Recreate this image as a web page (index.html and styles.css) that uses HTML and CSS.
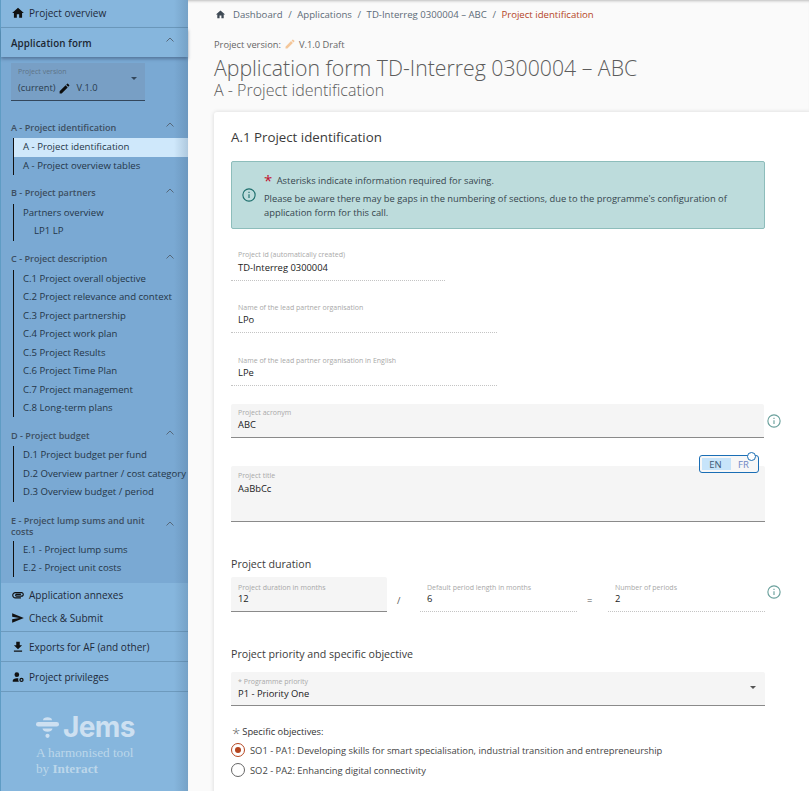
FILE: index.html
```html
<!DOCTYPE html>
<html lang="en">
<head>
<meta charset="utf-8">
<title>Application form</title>
<link rel="stylesheet" href="styles.css">
</head>
<body>
<div class="app">
  <aside class="sidebar">
    <a class="top-link first"><svg class="ico" viewBox="0 0 24 24"><path d="M10 20v-6h4v6h5v-8h3L12 3 2 12h3v8z"/></svg>Project overview</a>
    <div class="af-head"><span>Application form</span><svg class="chev" viewBox="0 0 8 5"><path d="M.5 4.500 4 1l3.500 3.500"/></svg></div>
    <div class="tree">
      <div class="version">
        <div class="version-label">Project version</div>
        <div class="version-value"><span>(current)</span><svg class="pencil" viewBox="0 0 24 24"><path d="M3 17.250V21h3.750L17.810 9.940l-3.750-3.750zM20.710 7.040a1 1 0 0 0 0-1.410l-2.340-2.340a1 1 0 0 0-1.410 0l-1.830 1.830 3.750 3.750z"/></svg><span class="vnum">V.1.0</span></div>
        <span class="caret"></span>
      </div>

      <section class="sec sec-a">
        <div class="sec-head"><span>A - Project identification</span><svg class="chev" viewBox="0 0 8 5"><path d="M.5 4.500 4 1l3.500 3.500"/></svg></div>
        <ul class="items">
          <li class="active">A - Project identification</li>
          <li>A - Project overview tables</li>
        </ul>
      </section>
      <section class="sec">
        <div class="sec-head"><span>B - Project partners</span><svg class="chev" viewBox="0 0 8 5"><path d="M.5 4.500 4 1l3.500 3.500"/></svg></div>
        <ul class="items">
          <li>Partners overview</li>
          <li class="indent">LP1 LP</li>
        </ul>
      </section>
      <section class="sec">
        <div class="sec-head"><span>C - Project description</span><svg class="chev" viewBox="0 0 8 5"><path d="M.5 4.500 4 1l3.500 3.500"/></svg></div>
        <ul class="items">
          <li>C.1 Project overall objective</li>
          <li>C.2 Project relevance and context</li>
          <li>C.3 Project partnership</li>
          <li>C.4 Project work plan</li>
          <li>C.5 Project Results</li>
          <li>C.6 Project Time Plan</li>
          <li>C.7 Project management</li>
          <li>C.8 Long-term plans</li>
        </ul>
      </section>
      <section class="sec">
        <div class="sec-head"><span>D - Project budget</span><svg class="chev" viewBox="0 0 8 5"><path d="M.5 4.500 4 1l3.500 3.500"/></svg></div>
        <ul class="items">
          <li>D.1 Project budget per fund</li>
          <li>D.2 Overview partner / cost category</li>
          <li>D.3 Overview budget / period</li>
        </ul>
      </section>
      <section class="sec sec-e">
        <div class="sec-head two"><span>E - Project lump sums and unit costs</span><svg class="chev" viewBox="0 0 8 5"><path d="M.5 4.500 4 1l3.500 3.500"/></svg></div>
        <ul class="items">
          <li>E.1 - Project lump sums</li>
          <li>E.2 - Project unit costs</li>
        </ul>
      </section>
    </div>
    <div class="bottom-group">
      <a class="bottom-link"><svg class="ico" viewBox="0 0 24 24"><path d="M2 12.500C2 9.460 4.460 7 7.500 7H18c2.210 0 4 1.790 4 4s-1.790 4-4 4H9.500C8.120 15 7 13.880 7 12.500S8.120 10 9.500 10H17v2H9.410c-.55 0-.55 1 0 1H18c1.100 0 2-.9 2-2s-.9-2-2-2H7.500C5.570 9 4 10.570 4 12.500S5.570 16 7.500 16H17v2H7.500C4.460 18 2 15.540 2 12.500z"/></svg>Application annexes</a>
      <a class="bottom-link"><svg class="ico" viewBox="0 0 24 24"><path d="M2 4 22 12 2 20v-6l12-2-12-2z"/></svg>Check &amp; Submit</a>
    </div>
    <a class="top-link ruled"><svg class="ico" viewBox="0 0 24 24"><path d="M19 9h-4V3H9v6H5l7 7zM5 18v2h14v-2z"/></svg>Exports for AF (and other)</a>
    <a class="top-link ruled"><svg class="ico" viewBox="0 0 24 24"><circle cx="10" cy="8" r="4"/><path d="M10 14c-4 0-7 2-7 4v2h10.500a7 7 0 0 1-1-5.800A11 11 0 0 0 10 14z"/><circle class="gear" cx="18" cy="17" r="2.600"/></svg>Project privileges</a>
    <div class="brand">
      <div class="brand-main">
        <svg class="brand-mark" viewBox="0 0 23 21"><path d="M7 3.200C7 1 9 .3 11.500.3S16 1 16 3.200z"/><rect x="0" y="5" width="23" height="4.500" rx="2.250"/><path d="M6.500 11.500h10c-.3 2.200-2.500 3.300-5 3.300s-4.700-1.100-5-3.300z"/><circle cx="11.500" cy="18.800" r="2.100"/></svg>
        <span class="brand-name">Jems</span>
      </div>
      <div class="brand-tag">A harmonised tool<br>by <b>Interact</b></div>
    </div>
  </aside>

  <main class="main">
    <nav class="crumbs">
      <svg class="crumb-home" viewBox="0 0 24 24"><path d="M10 20v-6h4v6h5v-8h3L12 3 2 12h3v8z"/></svg>
      <span>Dashboard</span><i>/</i><span>Applications</span><i>/</i><span>TD-Interreg 0300004 – ABC</span><i>/</i><span class="crumb-current">Project identification</span>
    </nav>
    <div class="version-line"><span>Project version:</span><svg class="draft-pencil" viewBox="0 0 24 24"><path d="M3 17.250V21h3.750L17.810 9.940l-3.750-3.750zM20.710 7.040a1 1 0 0 0 0-1.410l-2.340-2.340a1 1 0 0 0-1.410 0l-1.830 1.830 3.750 3.750z"/></svg><span>V.1.0 Draft</span></div>
    <h1>Application form TD-Interreg 0300004 – ABC</h1>
    <h2>A - Project identification</h2>

    <div class="card">
      <h3 class="card-title">A.1 Project identification</h3>
      <div class="alert">
        <svg class="info" viewBox="0 0 16 16"><circle cx="8" cy="8" r="7"/><path d="M8 7.200v4.300M8 4.200v1.500"/></svg>
        <div class="alert-text">
          <p><span class="star">*</span> Asterisks indicate information required for saving.</p>
          <p>Please be aware there may be gaps in the numbering of sections, due to the programme's configuration of application form for this call.</p>
        </div>
      </div>

      <div class="ro ro-id"><label>Project id (automatically created)</label><div class="val">TD-Interreg 0300004</div></div>
      <div class="ro ro-lead"><label>Name of the lead partner organisation</label><div class="val">LPo</div></div>
      <div class="ro ro-lead"><label>Name of the lead partner organisation in English</label><div class="val">LPe</div></div>

      <div class="row-info">
        <div class="fill fill-acr"><label>Project acronym</label><div class="val">ABC</div></div>
        <svg class="info side" viewBox="0 0 16 16"><circle cx="8" cy="8" r="7"/><path d="M8 7.200v4.300M8 4.200v1.500"/></svg>
      </div>

      <div class="title-wrap">
        <div class="lang">
          <span class="lang-on">EN</span><span class="lang-off">FR</span>
          <span class="lang-dot"></span>
        </div>
        <div class="fill fill-title"><label>Project title</label><div class="val">AaBbCc</div></div>
      </div>

      <h4 class="dur-head">Project duration</h4>
      <div class="duration">
        <div class="fill fill-dur"><label>Project duration in months</label><div class="val">12</div></div>
        <span class="op op-div">/</span>
        <div class="ro ro-dur"><label>Default period length in months</label><div class="val">6</div></div>
        <span class="op op-eq">=</span>
        <div class="ro ro-dur"><label>Number of periods</label><div class="val">2</div></div>
        <svg class="info side" viewBox="0 0 16 16"><circle cx="8" cy="8" r="7"/><path d="M8 7.200v4.300M8 4.200v1.500"/></svg>
      </div>

      <h4 class="prio-head">Project priority and specific objective</h4>
      <div class="fill fill-sel"><label>* Programme priority</label><div class="val">P1 - Priority One</div><span class="sel-caret"></span></div>

      <div class="so-label"><span class="so-star">*</span><span>Specific objectives:</span></div>
      <div class="radio checked first-radio"><span class="dot"></span>SO1 - PA1: Developing skills for smart specialisation, industrial transition and entrepreneurship</div>
      <div class="radio"><span class="dot"></span>SO2 - PA2: Enhancing digital connectivity</div>
    </div>
  </main>
</div>
</body>
</html>
```
FILE: styles.css
```css
* { box-sizing: border-box; }
html, body { margin: 0; padding: 0; }
body { font-family: "Open Sans", "Liberation Sans", sans-serif; color: #222; overflow: hidden; }
.app { display: flex; width: 809px; height: 791px; overflow: hidden; background: #fafafa; }

/* Sidebar */
.sidebar { width: 188px; flex: none; height: 791px; background: #86b6dd; position: relative; font-size: 10.050px; color: #1e2a3a; border-left: 1px solid #5f9cc4; }
.sidebar::after { content: ""; position: absolute; top: 0; right: 0; bottom: 0; width: 14px; background: linear-gradient(to right, rgba(60,90,120,0), rgba(60,90,120,.22)); pointer-events: none; }
.ico { width: 14px; height: 14px; fill: #111; flex: none; margin-right: 4px; }
.gear { fill: none; stroke: #111; stroke-width: 2.200; }
.chev { width: 8px; height: 5px; fill: none; stroke: #56687a; stroke-width: 1; flex: none; }
.top-link { display: flex; align-items: center; height: 30px; padding-left: 10px; border-bottom: 1px solid #6d9abd; }
.top-link.first { height: 28px; padding-bottom: 2px; }
.af-head { display: flex; justify-content: space-between; align-items: center; height: 29px; padding: 2px 14px 0 10px; font-size: 9.800px; font-weight: 600; color: #1c2733; letter-spacing: .1px; box-shadow: 0 2px 3px rgba(40,60,90,.45); position: relative; }
.af-head .chev { margin-top: -8px; }
.tree { background: #7aa9d3; height: 526px; overflow: hidden; padding-top: 6px; font-size: 9.600px; }
.version { position: relative; margin-left: 10px; width: 134px; height: 38px; background: #789fc5; border-bottom: 1px solid #33475c; padding: 4px 7px 0; }
.version-label { font-size: 7px; color: #5e7488; line-height: 10px; }
.version-value { font-size: 9.300px; line-height: 14px; margin-top: 4px; color: #2a3c4e; display: flex; align-items: center; gap: 3px; }
.pencil { width: 13px; height: 13px; fill: #0c0c0c; }
.vnum { margin-left: 2px; }
.caret { position: absolute; right: 8px; top: 14px; border: 3px solid transparent; border-top: 3px solid #33475c; border-bottom: 0; }
.sec { margin-top: 9.300px; }
.sec-a { margin-top: 17.500px; }
.sec-e { margin-top: 12.800px; }
.sec-head { display: flex; justify-content: space-between; align-items: center; min-height: 17px; padding: 0 14px 0 10px; font-size: 9.100px; font-weight: 600; color: #3d4f62; line-height: 11px; }
.sec-head.two { margin-bottom: 4px; }
.sec-head.two span { width: 140px; }
.sec-head .chev { margin-top: -5px; }
.items { list-style: none; margin: 2.700px 0 0 12px; padding: 0; border-left: 1px solid #111; }
.items li { height: 18.450px; line-height: 18.500px; padding-left: 9px; color: #253648; white-space: nowrap; }
.items li.active { background: #cfe8fb; }
.items li.indent { padding-left: 20px; }
.bottom-group { border-bottom: 1px solid #6d9abd; height: 49px; }
.bottom-link { display: flex; align-items: center; height: 23px; padding-left: 10px; }
.brand { padding: 25px 0 0 35px; color: #cde0f1; }
.brand-main { display: flex; align-items: center; gap: 4px; }
.brand-mark { width: 23px; height: 21px; fill: #cde0f1; }
.brand-name { font-family: "Inter", "Liberation Sans", sans-serif; font-weight: 700; font-size: 28px; line-height: 21px; letter-spacing: -.6px; }
.brand-tag { font-family: "Liberation Serif", serif; font-size: 13.200px; line-height: 15.500px; margin-top: 7px; color: #bcd6ea; }

/* Main */
.main { flex: 1; min-width: 0; position: relative; padding: 0 0 0 26px; box-shadow: inset 0 3px 3px -2px rgba(0,0,0,.25); }
.crumbs { display: flex; align-items: center; height: 28px; font-size: 9.600px; color: #5d6b78; margin-left: 1px; }
.crumbs i { font-style: normal; margin: 0 5.500px 0 5.700px; }
.crumb-home { width: 11px; height: 11px; fill: #3f4a55; margin-right: 7px; }
.crumb-current { color: #b5451f; }
.version-line { display: flex; align-items: center; gap: 3px; font-size: 9.300px; color: #666; margin-top: 9px; height: 14px; white-space: pre; }
.draft-pencil { width: 12px; height: 12px; fill: #f4c79a; }
h1 { margin: 4px 0 0; font-size: 21.250px; font-weight: 300; line-height: 25px; color: #5c5c5c; white-space: nowrap; }
h2 { margin: 0; font-size: 16px; font-weight: 300; line-height: 20px; color: #5c5c5c; }
.card { background: #fff; margin-top: 12px; height: 700px; padding: 15px 0 0 17px; border-radius: 3px 0 0 0; box-shadow: 0 0 4px rgba(0,0,0,.14); width: 596px; }
.card-title { margin: 0; font-size: 13.300px; font-weight: 400; line-height: 20px; color: #3a3a3a; }
.alert { display: flex; align-items: center; width: 534px; height: 68px; margin-top: 14px; background: #bddcdc; border: 1px solid #8dbdbb; border-radius: 2px; padding: 0 10px; font-size: 9.350px; color: #37474f; }
.alert .info { margin-right: 8px; }
.alert-text { line-height: 14px; }
.alert-text p { margin: 4px 0 0; }
.star { color: #c2112f; font-size: 15px; line-height: 10px; vertical-align: -2px; margin-right: 2px; }
.info { width: 14px; height: 14px; fill: none; stroke: #1d6e6c; stroke-width: 1.300; flex: none; }
.info.side { stroke: #6aa09c; }
label { display: block; font-size: 7px; line-height: 10px; padding-top: 1px; margin-bottom: -1px; color: #a8a8a8; white-space: nowrap; }
.val { font-size: 9.400px; line-height: 13px; color: #222; margin-top: 2px; }
.ro { padding: 6px 7px 0; border-bottom: 1px dotted #c4c4c4; }
.ro-id { width: 214px; height: 37px; margin-top: 15px; padding-top: 5px; }
.ro-lead { width: 266px; height: 37px; margin-top: 16px; }
.ro-lead .val { margin-top: 1px; }
.ro-id + .ro-lead { margin-top: 15px; }
.row-info { display: flex; align-items: center; width: 550px; margin-top: 18px; justify-content: space-between; }
.fill { position: relative; background: #f5f5f5; border-bottom: 1px solid #8a8a8a; padding: 4px 7px 0; border-radius: 2px 2px 0 0; }
.fill-acr { width: 533px; height: 34px; padding-top: 3px; }
.fill-acr .val { margin-top: 1px; }
.title-wrap { position: relative; width: 534px; margin-top: 28px; }
.fill-title { height: 56px; }
.lang { position: absolute; right: 6px; top: -11px; z-index: 2; width: 60px; height: 18px; display: flex; padding: 2px; border: 1px solid #1a6eb5; border-radius: 3px; background: #f7f7f7; font-size: 9.500px; line-height: 13px; text-align: center; color: #4b6f95; }
.lang-on { width: 30px; background: #c7e4fa; color: #405a75; padding-right: 2px; }
.lang-off { width: 26px; color: #6f88c4; }
.lang-dot { position: absolute; right: 2px; top: -4px; width: 9px; height: 9px; border: 1px solid #1a6eb5; border-radius: 50%; background: #fff; }
.dur-head, .prio-head { margin: 0; font-size: 10.650px; font-weight: 400; line-height: 16px; color: #3a3a3a; }
.dur-head { margin-top: 34px; }
.duration { display: flex; margin-top: 5px; width: 550px; align-items: flex-start; }
.fill-dur { width: 156px; height: 35px; padding-top: 5px; }
.ro-dur { width: 157px; height: 35px; padding-top: 5px; }
.duration .val { margin-top: 0; }
.op { font-size: 9.400px; line-height: 13px; color: #555; margin-top: 17px; padding-left: 10px; }
.op-div { width: 33px; }
.op-eq { width: 31px; }
.duration .side { margin: 8px 0 0 2px; }
.prio-head { margin-top: 34px; }
.fill-sel { width: 534px; height: 34px; margin-top: 10px; }
.fill-sel .val { margin-top: 1px; }
.sel-caret { position: absolute; right: 9px; top: 14px; border: 3.500px solid transparent; border-top: 3.500px solid #555; border-bottom: 0; }
.so-label { display: flex; align-items: center; gap: 2px; font-size: 9.350px; color: #333; margin-top: 18px; height: 14px; }
.so-star { font-size: 15px; line-height: 10px; color: #666; margin: 3px 0 0 1px; font-weight: 300; }
.radio { display: flex; align-items: center; font-size: 9.350px; color: #444; height: 20px; white-space: nowrap; }
.first-radio { margin-top: 2px; }
.dot { width: 14px; height: 14px; border: 1px solid #666; border-radius: 50%; margin-right: 5px; flex: none; position: relative; }
.checked .dot { border: 1.500px solid #b5451f; }
.checked .dot::after { content: ""; position: absolute; left: 2.500px; top: 2.500px; width: 6px; height: 6px; border-radius: 50%; background: #b5451f; }
```
